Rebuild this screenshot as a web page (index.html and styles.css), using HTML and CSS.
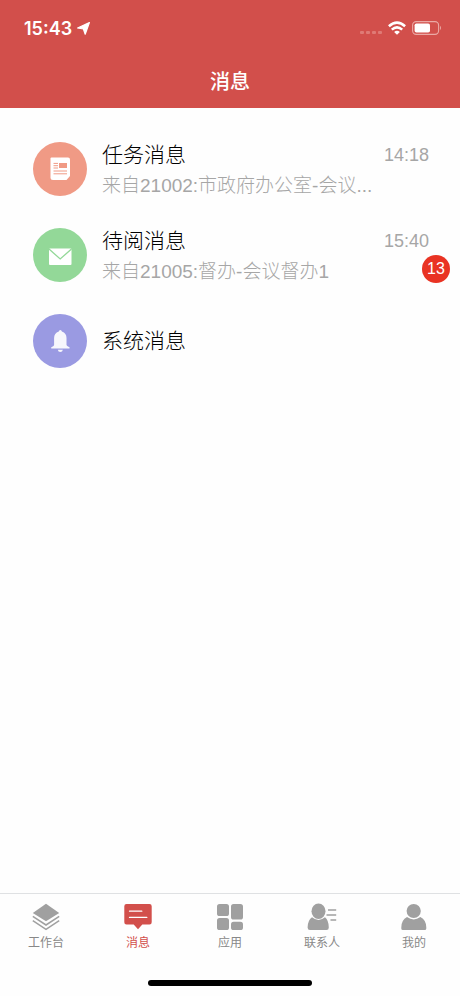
FILE: index.html
```html
<!DOCTYPE html>
<html lang="zh-CN">
<head>
    <meta charset="UTF-8">
    <meta name="viewport" content="width=device-width, initial-scale=1.0">
    <title>消息</title>
    <link rel="stylesheet" href="styles.css">
</head>
<body>
    <header class="header">
        <div class="status-bar">
            <div class="status-left">
                <span>15:43</span>
                <svg width="13" height="13" viewBox="0 0 13 13" fill="#fff"><path d="M12.4 0.6 L8.2 12.2 L6.4 7 L0.6 6 Z" stroke="#fff" stroke-width="1.2" stroke-linejoin="round"/></svg>
            </div>
            <div class="status-right">
                <svg class="signal" width="22" height="4" viewBox="0 0 22 4" fill="#df7a75"><rect width="4" height="3" rx="1"/><rect x="6" width="4" height="3" rx="1"/><rect x="12" width="4" height="3" rx="1"/><rect x="18" width="4" height="3" rx="1"/></svg>
                <svg width="18" height="14" viewBox="0 0 18 14" fill="none" stroke="#fff" stroke-width="2.6"><path d="M0.9 5.2 Q9 -2 17.1 5.2"/><path d="M3.8 8.6 Q9 4 14.2 8.6"/><path d="M9 13.8 L6.1 10.9 Q9 8.5 11.9 10.9 Z" fill="#fff" stroke="none"/></svg>
                <svg width="30" height="14" viewBox="0 0 30 14"><rect x="0.6" y="0.6" width="26" height="12.8" rx="3.6" fill="none" stroke="#eba9a5" stroke-width="1.1"/><rect x="2.6" y="2.5" width="15.4" height="9" rx="1.8" fill="#fff"/><path d="M28 4.8 Q30 7 28 9.2 Z" fill="#eba9a5"/></svg>
            </div>
        </div>
        <h1 class="title">消息</h1>
    </header>

    <main class="messages">
        <a class="message" href="#">
            <span class="avatar task">
                <svg width="54" height="54" viewBox="0 0 54 54"><path d="M18.5 15.5 H35 Q37 15.5 37 17.5 V34 L33.5 38 H20 Q17.5 38 17.5 35.5 V16.5 Q17.5 15.5 18.5 15.5 Z" fill="#fff"/><rect x="26" y="21" width="8" height="5" fill="#f09a85"/><path d="M20.5 21.4 H25 M20.5 23.7 H25 M20.5 26 H25 M20.5 29 H34 M20.5 31.8 H34" stroke="#f09a85"/></svg>
            </span>
            <span class="content">
                <span class="name">任务消息</span>
                <span class="summary">来自21002:市政府办公室-会议...</span>
            </span>
            <span class="meta">
                <time>14:18</time>
            </span>
        </a>
        <a class="message" href="#">
            <span class="avatar unread">
                <svg width="54" height="54" viewBox="0 0 54 54"><rect x="16" y="20.5" width="22.5" height="16.5" rx="1" fill="#fff"/><path d="M16 21 L27.2 31 L38.5 21" fill="none" stroke="#93d898" stroke-width="1.3"/></svg>
            </span>
            <span class="content">
                <span class="name">待阅消息</span>
                <span class="summary">来自21005:督办-会议督办1</span>
            </span>
            <span class="meta">
                <time>15:40</time>
                <span class="badge">13</span>
            </span>
        </a>
        <a class="message" href="#">
            <span class="avatar system">
                <svg width="54" height="54" viewBox="0 0 54 54" fill="#f7f7fc"><path d="M27.3 16 Q28.6 16 28.9 17.5 Q33.5 19 33.5 24 V31 Q33.7 32.2 36 33 Q37 33.4 36.5 34.5 H18.3 Q17.6 33.4 18.8 33 Q21.1 32.2 21.1 31 V24 Q21.1 19 25.8 17.5 Q26 16 27.3 16 Z"/><path d="M24.8 35.7 H29.9 Q29.4 38 27.3 38 Q25.2 38 24.8 35.7 Z"/></svg>
            </span>
            <span class="content">
                <span class="name">系统消息</span>
            </span>
        </a>
    </main>

    <footer class="footer">
        <nav class="tabs">
            <a class="tab" href="#">
                <svg width="28" height="28" viewBox="0 0 28 28"><path d="M14 0.8 L27.2 10 L14 18.3 L0.8 10 Z" fill="#a0a0a0"/><path d="M0.8 13.4 L14 22 L27.2 13.4 M0.8 17.6 L14 26.3 L27.2 17.6" fill="none" stroke="#a0a0a0" stroke-width="1.5"/></svg>
                <span>工作台</span>
            </a>
            <a class="tab active" href="#">
                <svg width="28" height="28" viewBox="0 0 28 28"><path d="M2.5 1 H25.5 Q27.7 1 27.7 3.2 V19.3 Q27.7 21.5 25.5 21.5 H18.3 L14 26.2 L9.7 21.5 H2.5 Q0.3 21.5 0.3 19.3 V3.2 Q0.3 1 2.5 1 Z" fill="#d24f4b"/><path d="M5.5 8.2 H17.8 M5.5 14.4 H22.8" stroke="#fff" stroke-width="1.3" stroke-linecap="round"/></svg>
                <span>消息</span>
            </a>
            <a class="tab" href="#">
                <svg width="28" height="28" viewBox="0 0 28 28" fill="#a0a0a0"><rect x="1" y="1" width="12" height="12" rx="2.6"/><rect x="15" y="1" width="12" height="15.5" rx="2.6"/><rect x="1" y="15" width="12" height="12" rx="2.6"/><rect x="15" y="18.8" width="12" height="8.2" rx="2.6"/></svg>
                <span>应用</span>
            </a>
            <a class="tab" href="#">
                <svg width="30" height="28" viewBox="0 0 30 28" fill="#a0a0a0"><ellipse cx="11.5" cy="8.2" rx="7" ry="7.7"/><path d="M5 14.2 Q11.5 19.6 18 14.2 Q21.8 17.4 21.8 24.5 Q21.8 27 19.5 27 H3 Q0.6 27 0.6 24.5 Q0.6 17.4 5 14.2 Z"/><path d="M21 7 H29.2 M19.5 12 H29.2 M23.5 17 H29.2" stroke="#a0a0a0" stroke-width="1.3"/></svg>
                <span>联系人</span>
            </a>
            <a class="tab" href="#">
                <svg width="28" height="28" viewBox="0 0 28 28" fill="#a0a0a0"><circle cx="13.7" cy="8" r="7.1"/><path d="M7 14 Q13.7 18.9 20.4 14 Q26.3 17 26.3 24.5 V25.5 Q26.3 27 24.7 27 H2.9 Q1.3 27 1.3 25.5 V24.5 Q1.3 17 7 14 Z"/></svg>
                <span>我的</span>
            </a>
        </nav>
        <div class="home-indicator"></div>
    </footer>
</body>
</html>
```
FILE: styles.css
```css
* {
    box-sizing: border-box;
}

body {
    margin: 0;
    min-height: 100vh;
    display: flex;
    flex-direction: column;
    background: #fefefe;
    font-family: "Liberation Sans", "Noto Sans CJK SC", sans-serif;
}

a {
    color: inherit;
    text-decoration: none;
}

svg {
    display: block;
}

.header {
    background: #d24f4b;
    color: #fff;
}

.status-bar {
    display: flex;
    justify-content: space-between;
    align-items: center;
    height: 56px;
    padding: 0 18px 0 24px;
}

.status-left {
    display: flex;
    align-items: center;
    gap: 5px;
    font-family: Inter, sans-serif;
    font-size: 18px;
    font-weight: 600;
}

.status-right {
    display: flex;
    align-items: center;
    gap: 6px;
}

.signal {
    align-self: flex-end;
}

.title {
    margin: 0;
    font-size: 20px;
    font-weight: 500;
    line-height: 52px;
    text-align: center;
}

.messages {
    flex: 1;
    padding-top: 18px;
}

.message {
    display: flex;
    align-items: center;
    height: 86px;
    padding: 0 31px 0 33px;
}

.avatar {
    flex-shrink: 0;
    margin-right: 15px;
    border-radius: 50%;
}

.task {
    background: #f09a85;
}

.unread {
    background: #93d898;
}

.system {
    background: #9a9ae2;
}

.content {
    flex: 1;
    min-width: 0;
    display: flex;
    flex-direction: column;
}

.name {
    color: #000;
    font-size: 21px;
    line-height: 34px;
    font-weight: 300;
}

.summary {
    overflow: hidden;
    color: #a6a6a6;
    font-size: 19px;
    font-weight: 300;
    line-height: 28px;
    white-space: nowrap;
    text-overflow: ellipsis;
}

.meta {
    position: relative;
    height: 62px;
    margin-left: 8px;
    color: #a6a6a6;
    font-size: 18px;
    line-height: 34px;
}

.badge {
    position: absolute;
    right: -21px;
    bottom: 3px;
    width: 28px;
    height: 28px;
    border-radius: 50%;
    background: #e93323;
    color: #fff;
    font-size: 16px;
    line-height: 28px;
    text-align: center;
}

.footer {
    border-top: 1px solid #dfe1e3;
}

.tabs {
    display: grid;
    grid-template-columns: repeat(5, 1fr);
    height: 86px;
    padding-top: 9px;
}

.tab {
    display: flex;
    flex-direction: column;
    align-items: center;
    color: #888;
    font-size: 12px;
    line-height: 24px;
}

.active {
    color: #d24f4b;
}

.home-indicator {
    width: 164px;
    height: 6px;
    margin: 0 auto 10px;
    border-radius: 3px;
    background: #000;
}
```
